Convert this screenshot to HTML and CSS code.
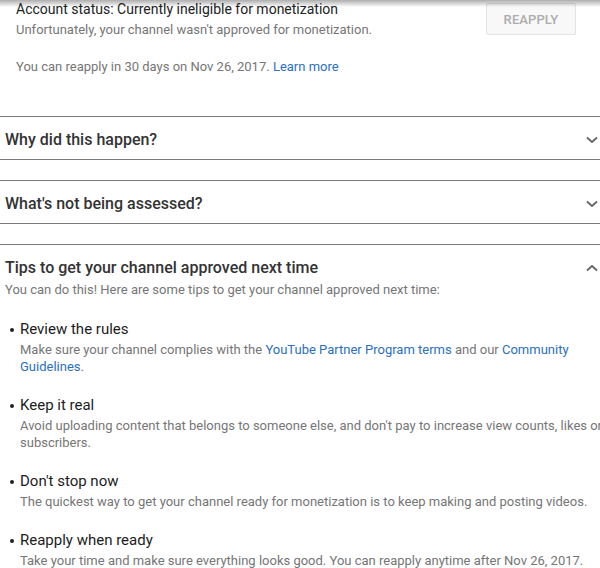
FILE: index.html
```html
<!DOCTYPE html>
<html lang="en">
<head>
<meta charset="utf-8">
<title>Monetization status</title>
<link rel="stylesheet" href="styles.css">
</head>
<body>
<div class="topshade"></div>

<section class="status">
  <div class="status-text">
    <div class="status-title">Account status: Currently ineligible for monetization</div>
    <div class="status-sub">Unfortunately, your channel wasn't approved for monetization.</div>
    <div class="status-note">You can reapply in 30 days on Nov 26, 2017. <a href="#" class="link">Learn more</a></div>
  </div>
  <button class="reapply" type="button" disabled>REAPPLY</button>
</section>

<section class="panel">
  <div class="panel-head">
    <span>Why did this happen?</span>
    <svg class="chev" width="12" height="8" viewBox="0 0 12 8"><path d="M1 1.5 L6 6 L11 1.5" fill="none" stroke="#666" stroke-width="1.8"/></svg>
  </div>
</section>

<section class="panel">
  <div class="panel-head">
    <span>What's not being assessed?</span>
    <svg class="chev" width="12" height="8" viewBox="0 0 12 8"><path d="M1 1.5 L6 6 L11 1.5" fill="none" stroke="#666" stroke-width="1.8"/></svg>
  </div>
</section>

<section class="panel open">
  <div class="panel-head">
    <span>Tips to get your channel approved next time</span>
    <svg class="chev" width="12" height="8" viewBox="0 0 12 8"><path d="M1 6.5 L6 2 L11 6.5" fill="none" stroke="#666" stroke-width="1.8"/></svg>
  </div>
  <p class="panel-intro">You can do this! Here are some tips to get your channel approved next time:</p>
  <ul class="tips">
    <li>
      <div class="tip-title">Review the rules</div>
      <div class="tip-desc">Make sure your channel complies with the <a href="#" class="link">YouTube Partner Program terms</a> and our <a href="#" class="link">Community Guidelines</a>.</div>
    </li>
    <li>
      <div class="tip-title">Keep it real</div>
      <div class="tip-desc">Avoid uploading content that belongs to someone else, and don't pay to increase view counts, likes or subscribers.</div>
    </li>
    <li>
      <div class="tip-title">Don't stop now</div>
      <div class="tip-desc">The quickest way to get your channel ready for monetization is to keep making and posting videos.</div>
    </li>
    <li>
      <div class="tip-title">Reapply when ready</div>
      <div class="tip-desc">Take your time and make sure everything looks good. You can reapply anytime after Nov 26, 2017.</div>
    </li>
  </ul>
</section>
</body>
</html>
```

FILE: styles.css
```css
html {
  overflow: hidden;
}

body {
  margin: 0;
  width: 620px;
  font-family: Roboto, "Liberation Sans", Arial, sans-serif;
  color: #212121;
  background: #fff;
}

/* shadow cast by the app bar above the page */
.topshade {
  position: fixed;
  top: 0;
  left: 0;
  width: 600px;
  height: 7px;
  background: linear-gradient(to bottom, rgba(0, 0, 0, 0.32), rgba(0, 0, 0, 0));
  pointer-events: none;
}

.link {
  color: #2b6fbf;
  text-decoration: none;
}

/* account status block */
.status {
  display: flex;
  justify-content: space-between;
  align-items: flex-start;
  width: 600px;
  box-sizing: border-box;
  padding: 1px 24px 0 16px;
  margin-bottom: 40px;
}

.status-title {
  font-size: 14px;
  line-height: 16px;
  color: #222;
}

.status-sub {
  margin-top: 4px;
  font-size: 13px;
  line-height: 18px;
  color: #767676;
}

.status-note {
  margin-top: 19px;
  font-size: 13px;
  line-height: 18px;
  color: #767676;
}

.reapply {
  margin-top: 2px;
  width: 90px;
  height: 32px;
  border: 1px solid #e4e4e4;
  border-radius: 2px;
  background: #f8f8f8;
  color: #adadad;
  font-family: inherit;
  font-size: 13px;
  font-weight: 500;
  letter-spacing: 0.1px;
  padding: 0;
}

/* collapsible panels */
.panel {
  width: 600px;
  border-top: 1px solid #7a7a7a;
  border-bottom: 1px solid #7a7a7a;
  margin-bottom: 20px;
}

.panel.open {
  border-bottom: none;
  margin-bottom: 0;
}

.panel-head {
  display: flex;
  justify-content: space-between;
  align-items: center;
  padding: 13px 2px 9px 5px;
  font-size: 16px;
  font-weight: 500;
  line-height: 20px;
  color: #333;
}

.panel.open .panel-head {
  padding-bottom: 0;
}

.panel-intro {
  margin: 3px 0 0 5px;
  font-size: 13px;
  line-height: 18px;
  color: #767676;
}

.tips {
  list-style: none;
  margin: 20px 0 0;
  padding: 0 0 0 20px;
  display: flex;
  flex-direction: column;
  gap: 20px;
}

.tip-title {
  position: relative;
  font-size: 15px;
  line-height: 20px;
  color: #1c1c1c;
}

.tip-title::before {
  content: "";
  position: absolute;
  left: -10px;
  top: 9px;
  width: 4px;
  height: 4px;
  border-radius: 50%;
  background: #222;
}

.tip-desc {
  margin-top: 2px;
  width: 600px;
  font-size: 13px;
  line-height: 17px;
  color: #767676;
}
```
